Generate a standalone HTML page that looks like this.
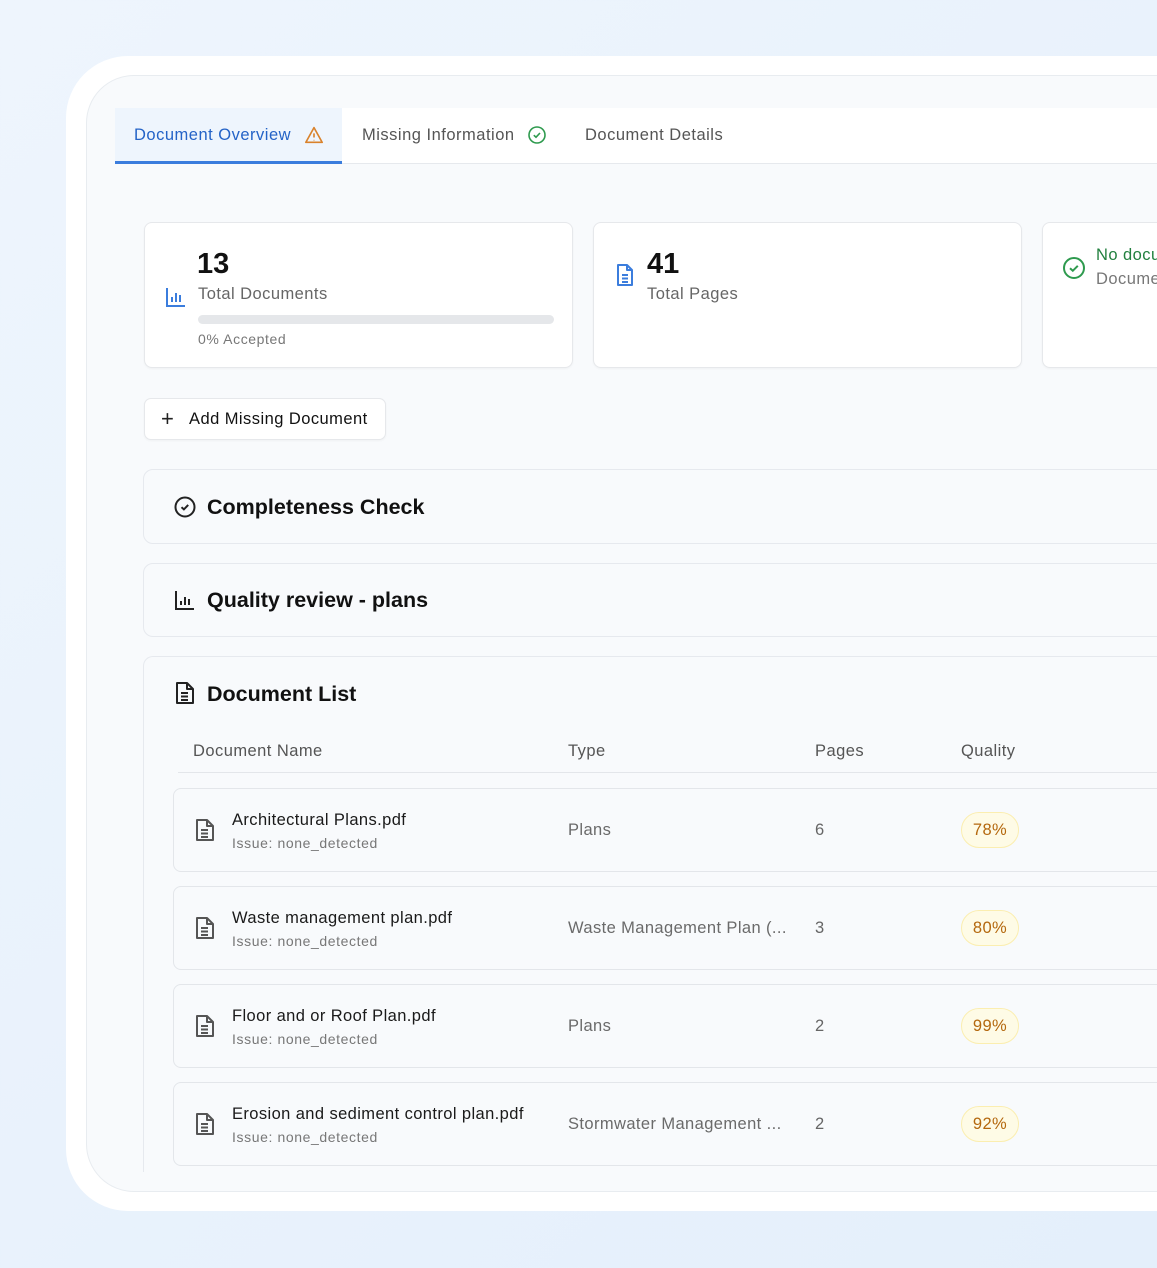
<!DOCTYPE html>
<html><head><style>
*{box-sizing:border-box;margin:0;padding:0}
body{width:1157px;height:1268px;overflow:hidden;background:linear-gradient(135deg,#eef5fd,#e4effb);font-family:"Liberation Sans",sans-serif;position:relative;color:#111}
.frame{position:absolute;left:66px;top:56px;width:1200px;height:1155px;background:#fff;border-radius:62px}
.panel{position:absolute;left:86px;top:75px;width:1200px;height:1117px;background:#f8fafc;border:1px solid #e8ecf0;border-radius:48px;overflow:hidden}
.abs{position:absolute}
.ls{letter-spacing:.45px}
.tabs{position:absolute;left:115px;top:108px;width:1100px;height:56px;background:#fff;border-bottom:1px solid #e6e9ed}
.tab{position:absolute;top:0;height:56px;line-height:54px;font-size:16.5px;color:#555;letter-spacing:.5px}
.card{position:absolute;background:#fff;border:1px solid #e6e8eb;border-radius:8px;box-shadow:0 1px 2px rgba(0,0,0,.04)}
.sec{position:absolute;left:143px;width:1100px;background:#f8fafc;border:1px solid #e6e9ee;border-radius:10px}
.h{position:absolute;font-size:21.5px;font-weight:bold;color:#111}
.row{position:absolute;left:173px;width:1000px;height:84px;background:#f8fafc;border:1px solid #e3e6ea;border-radius:8px}
.row .n{position:absolute;left:58px;top:22px;font-size:16.5px;color:#1a1a1a;letter-spacing:.4px}
.row .i{position:absolute;left:58px;top:46px;font-size:14px;color:#777;letter-spacing:.6px}
.row .t{position:absolute;left:394px;top:32px;font-size:16.5px;color:#6a6a6a;letter-spacing:.4px}
.row .p{position:absolute;left:641px;top:32px;font-size:16.5px;color:#666}
.row .q{position:absolute;left:787px;top:23px;width:58px;height:36px;border-radius:18px;background:#fefbe6;border:1px solid #fbeeb0;color:#b4680e;font-size:16.5px;text-align:center;line-height:34px;letter-spacing:.4px}
.row svg{position:absolute;left:21px;top:29px}
</style></head><body>
<div class="frame"></div>
<div class="panel"></div>
<div class="tabs">
 <div class="tab" style="left:0;width:227px;background:#eef5fd;border-bottom:3px solid #3b7ddd;color:#2463c7;padding-left:19px">Document Overview</div>
 <svg width="20" height="18" viewBox="0 0 24 22" style="position:absolute;left:189px;top:18px" fill="none" stroke="#d9822b" stroke-width="2"><path d="M12 2L22 20H2Z" stroke-linejoin="round"/><path d="M12 9v5M12 17v.5"/></svg>
 <div class="tab" style="left:247px">Missing Information</div>
 <svg width="20" height="20" viewBox="0 0 20 20" class="abs" style="left:412px;top:17px" fill="none" stroke="#2e9a4e" stroke-width="1.6"><circle cx="10" cy="10" r="8"/><path d="M6.8 10.2l2.2 2 4-4.2"/></svg>
 <div class="tab" style="left:470px">Document Details</div>
</div>

<div class="card" style="left:144px;top:222px;width:429px;height:146px">
 <div class="abs" style="left:52px;top:25px;font-size:29px;font-weight:bold">13</div>
 <svg class="abs" style="left:20px;top:63px" width="22" height="22" viewBox="0 0 22 22" fill="none" stroke="#3b7ddd" stroke-width="2"><path d="M2 2v18h18M7 16v-5M11 16V7M15 16v-7"/></svg>
 <div class="abs ls" style="left:53px;top:62px;font-size:16.5px;color:#666">Total Documents</div>
 <div class="abs" style="left:53px;top:92px;width:356px;height:9px;border-radius:5px;background:#e5e7ea"></div>
 <div class="abs" style="left:53px;top:108px;font-size:14px;color:#777;letter-spacing:.6px">0% Accepted</div>
</div>
<div class="card" style="left:593px;top:222px;width:429px;height:146px">
 <div class="abs" style="left:53px;top:25px;font-size:29px;font-weight:bold">41</div>
 <svg class="abs" style="left:20px;top:40px" width="22" height="24" viewBox="0 0 22 24" fill="none" stroke="#3b7ddd" stroke-width="2" stroke-linejoin="round"><path d="M4 2h9l5 5v15H4Z M13 2v5h5M8 12h6M8 15.5h6M8 19h6"/></svg>
 <div class="abs ls" style="left:53px;top:62px;font-size:16.5px;color:#666">Total Pages</div>
</div>
<div class="card" style="left:1042px;top:222px;width:200px;height:146px">
 <svg class="abs" style="left:19px;top:33px" width="24" height="24" viewBox="0 0 24 24" fill="none" stroke="#2e9a4e" stroke-width="2"><circle cx="12" cy="12" r="10"/><path d="M8 12.3l2.8 2.5 5-5"/></svg>
 <div class="abs ls" style="left:53px;top:23px;font-size:16.5px;color:#22803f;white-space:nowrap">No documents missing</div>
 <div class="abs ls" style="left:53px;top:47px;font-size:16.5px;color:#777;white-space:nowrap">Documents</div>
</div>

<div class="card" style="left:144px;top:398px;width:242px;height:42px;border-radius:7px">
 <div class="abs" style="left:16px;top:7px;font-size:22px;color:#222">+</div>
 <div class="abs ls" style="left:44px;top:11px;font-size:16.5px;color:#111">Add Missing Document</div>
</div>

<div class="sec" style="top:469px;height:75px">
 <svg class="abs" style="left:30px;top:26px" width="22" height="22" viewBox="0 0 22 22" fill="none" stroke="#222" stroke-width="2"><circle cx="11" cy="11" r="9.5"/><path d="M7.5 11.2l2.4 2.2 4.3-4.5"/></svg>
 <div class="h" style="left:63px;top:25px">Completeness Check</div>
</div>
<div class="sec" style="top:563px;height:74px">
 <svg class="abs" style="left:30px;top:25px" width="22" height="22" viewBox="0 0 22 22" fill="none" stroke="#222" stroke-width="2"><path d="M2 2v18h18M7 16v-4M11 16V8M15 16v-6"/></svg>
 <div class="h" style="left:63px;top:24px">Quality review - plans</div>
</div>
<div class="sec" style="top:656px;height:516px;border-bottom:none;border-radius:10px 10px 0 0">
 <svg class="abs" style="left:31px;top:24px" width="20" height="24" viewBox="0 0 20 24" fill="none" stroke="#222" stroke-width="2" stroke-linejoin="round"><path d="M2 2h10l6 6v14H2Z M12 2v6h6M6 12h7M6 15.5h7M6 19h7"/></svg>
 <div class="h" style="left:63px;top:25px">Document List</div>
 <div class="abs" style="left:34px;top:115px;width:1060px;border-bottom:1px solid #e3e6ea"></div>
 <div class="abs ls" style="left:49px;top:85px;font-size:16.5px;color:#555">Document Name</div>
 <div class="abs ls" style="left:424px;top:85px;font-size:16.5px;color:#555">Type</div>
 <div class="abs ls" style="left:671px;top:85px;font-size:16.5px;color:#555">Pages</div>
 <div class="abs ls" style="left:817px;top:85px;font-size:16.5px;color:#555">Quality</div>
</div>

<div class="row" style="top:788px"><svg width="20" height="24" viewBox="0 0 20 24" fill="none" stroke="#555" stroke-width="2" stroke-linejoin="round"><path d="M2 2h10l6 6v14H2Z M12 2v6h6M6 12h7M6 15.5h7M6 19h7"/></svg><div class="n">Architectural Plans.pdf</div><div class="i">Issue: none_detected</div><div class="t">Plans</div><div class="p">6</div><div class="q">78%</div></div>
<div class="row" style="top:886px"><svg width="20" height="24" viewBox="0 0 20 24" fill="none" stroke="#555" stroke-width="2" stroke-linejoin="round"><path d="M2 2h10l6 6v14H2Z M12 2v6h6M6 12h7M6 15.5h7M6 19h7"/></svg><div class="n">Waste management plan.pdf</div><div class="i">Issue: none_detected</div><div class="t">Waste Management Plan (...</div><div class="p">3</div><div class="q">80%</div></div>
<div class="row" style="top:984px"><svg width="20" height="24" viewBox="0 0 20 24" fill="none" stroke="#555" stroke-width="2" stroke-linejoin="round"><path d="M2 2h10l6 6v14H2Z M12 2v6h6M6 12h7M6 15.5h7M6 19h7"/></svg><div class="n">Floor and or Roof Plan.pdf</div><div class="i">Issue: none_detected</div><div class="t">Plans</div><div class="p">2</div><div class="q">99%</div></div>
<div class="row" style="top:1082px"><svg width="20" height="24" viewBox="0 0 20 24" fill="none" stroke="#555" stroke-width="2" stroke-linejoin="round"><path d="M2 2h10l6 6v14H2Z M12 2v6h6M6 12h7M6 15.5h7M6 19h7"/></svg><div class="n">Erosion and sediment control plan.pdf</div><div class="i">Issue: none_detected</div><div class="t">Stormwater Management ...</div><div class="p">2</div><div class="q">92%</div></div>
</body></html>
